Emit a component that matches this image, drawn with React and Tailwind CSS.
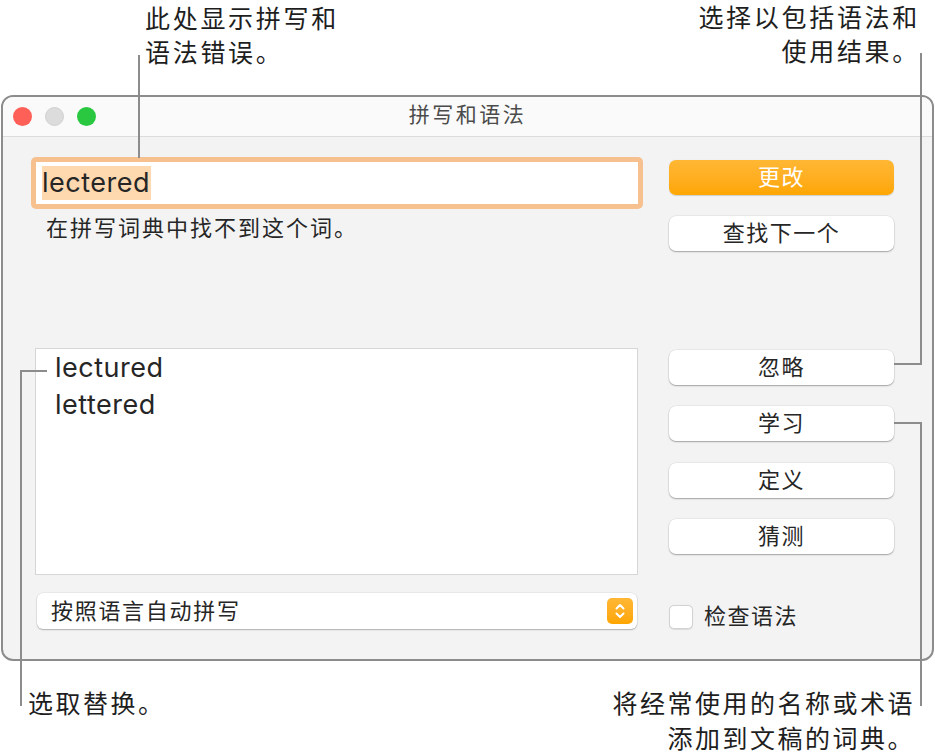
import React from 'react'

const CJK = '"Inter", "Noto Sans CJK SC", sans-serif'

const Btn = ({ children, primary }) => (
  <div
    className={`h-[35px] rounded-[7px] flex items-center justify-center text-[22px] tracking-[1.5px] ${
      primary
        ? 'bg-gradient-to-b from-[#ffb733] to-[#ffa600] text-white shadow-[0_0.5px_1px_rgba(0,0,0,0.15)]'
        : 'bg-white text-[#262626] shadow-[0_1px_1.5px_rgba(0,0,0,0.3),0_0_0_0.5px_rgba(0,0,0,0.08)]'
    }`}
  >
    {children}
  </div>
)

export default function App() {
  return (
    <div className="relative w-[935px] h-[756px] bg-white overflow-hidden text-[#1e1e1e]" style={{ fontFamily: CJK }}>
      {/* 顶部说明文字 */}
      <div className="flex justify-between h-[95px] text-[25px] leading-[34px] tracking-[2.7px]">
        <div className="ml-[145px] pt-[2px]">
          <div>此处显示拼写和</div>
          <div>语法错误。</div>
        </div>
        <div className="mr-[15px] pt-[1px] text-right">
          <div>选择以包括语法和</div>
          <div>使用结果。</div>
        </div>
      </div>

      {/* 窗口 */}
      <div className="ml-[1px] w-[933px] h-[566px] rounded-[12px] border-2 border-[#8c8c8c] bg-[#f3f3f3] overflow-hidden flex flex-col">
        {/* 标题栏 */}
        <div className="h-[40px] shrink-0 bg-[#fafafa] border-b border-[#dcdcdc] grid grid-cols-[1fr_auto_1fr] items-center">
          <div className="flex items-center gap-[13px] pl-[10px] -mt-[1px]">
            <div className="w-[19px] h-[19px] rounded-full bg-[#fe5f57]" />
            <div className="w-[19px] h-[19px] rounded-full bg-[#dcdcdc] border border-[#d0d0d0]" />
            <div className="w-[19px] h-[19px] rounded-full bg-[#2ac840]" />
          </div>
          <div className="text-[21px] tracking-[2.5px] text-[#4b4b4b] -mt-[3px]">拼写和语法</div>
          <div />
        </div>

        {/* 内容区 */}
        <div className="flex-1 flex pl-[28px] pr-[38px]">
          {/* 左列 */}
          <div className="w-[612px] flex flex-col">
            <div className="mt-[20px] h-[52px] rounded-[5px] bg-[#f6c18f] p-[5px]">
              <div className="h-full bg-white flex items-center pl-[6px]">
                <span className="bg-[#fed9b0] h-[34px] leading-[34px] text-[27px] tracking-[0.5px] text-[#262626] pr-[1px]">lectered</span>
              </div>
            </div>
            <div className="mt-[7px] ml-[15px] text-[22px] leading-[24px] tracking-[2px] text-[#262626]">
              在拼写词典中找不到这个词。
            </div>
            <div className="mt-[108px] ml-[4px] w-[603px] h-[227px] bg-white border border-[#d6d6d6] pl-[19px] text-[27px] tracking-[0.5px] leading-[37px] text-[#262626]">
              <div>lectured</div>
              <div>lettered</div>
            </div>
            <div className="mt-[18px] ml-[6px] w-[600px] h-[36px] rounded-[6px] bg-white shadow-[0_1px_1.5px_rgba(0,0,0,0.25),0_0_0_0.5px_rgba(0,0,0,0.08)] flex items-center justify-between pl-[14px] pr-[4px]">
              <span className="text-[22px] tracking-[1.7px] text-[#262626]">按照语言自动拼写</span>
              <div className="w-[26px] h-[26px] rounded-[5px] bg-gradient-to-b from-[#ffb733] to-[#ffa600] flex items-center justify-center">
                <svg width="12" height="18" viewBox="0 0 12 18" fill="none" stroke="white" strokeWidth="2" strokeLinecap="round" strokeLinejoin="round">
                  <path d="M2.5 6.5 L6 3 L9.5 6.5" />
                  <path d="M2.5 11.5 L6 15 L9.5 11.5" />
                </svg>
              </div>
            </div>
          </div>

          {/* 右列 */}
          <div className="ml-[26px] w-[225px] flex flex-col">
            <div className="mt-[23px]"><Btn primary>更改</Btn></div>
            <div className="mt-[21px]"><Btn>查找下一个</Btn></div>
            <div className="mt-[99px]"><Btn>忽略</Btn></div>
            <div className="mt-[21px]"><Btn>学习</Btn></div>
            <div className="mt-[22px]"><Btn>定义</Btn></div>
            <div className="mt-[21px]"><Btn>猜测</Btn></div>
            <div className="mt-[46px] flex items-center gap-[11px]">
              <div className="w-[24px] h-[24px] rounded-[5px] bg-white border border-[#d2d2d2] shadow-[0_0.5px_1px_rgba(0,0,0,0.1)]" />
              <span className="text-[22px] tracking-[1.5px] text-[#262626]">检查语法</span>
            </div>
          </div>
        </div>
      </div>

      {/* 底部说明文字 */}
      <div className="flex justify-between text-[25px] leading-[35px] tracking-[2.5px] mt-[26px]">
        <div className="ml-[28px]">选取替换。</div>
        <div className="mr-[20px] text-right">
          <div>将经常使用的名称或术语</div>
          <div>添加到文稿的词典。</div>
        </div>
      </div>

      {/* 引线 */}
      <svg className="absolute inset-0 pointer-events-none" width="935" height="756" fill="none" stroke="#8c8c8c" strokeWidth="2">
        <path d="M139 55 V158" />
        <path d="M921 53 V364 H894" />
        <path d="M894 423 H921 V706" />
        <path d="M47 371 H21 V706" />
      </svg>
    </div>
  )
}
